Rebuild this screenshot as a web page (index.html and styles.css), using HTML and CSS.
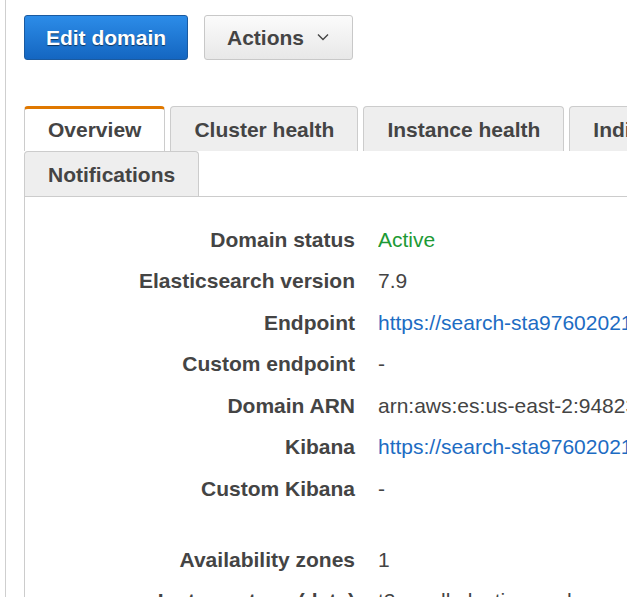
FILE: index.html
```html
<!DOCTYPE html>
<html>
<head>
<meta charset="utf-8">
<link rel="stylesheet" href="styles.css">
</head>
<body>
<div class="page">
  <div class="toolbar">
    <button class="btn btn-primary">Edit domain</button>
    <button class="btn btn-default">Actions
      <svg class="chev" width="12" height="8" viewBox="0 0 12 8"><path d="M1 1.5 L6 6.5 L11 1.5" fill="none" stroke="#444" stroke-width="1.4"/></svg>
    </button>
  </div>
  <div class="tabs-wrap">
    <div class="tabs">
      <div class="tab active">Overview</div>
      <div class="tab">Cluster health</div>
      <div class="tab">Instance health</div>
      <div class="tab">Indices</div>
      <div class="tab">Notifications</div>
    </div>
    <div class="panel">
      <div class="details">
        <div class="label">Domain status</div><div class="value green">Active</div>
        <div class="label">Elasticsearch version</div><div class="value">7.9</div>
        <div class="label">Endpoint</div><div class="value link">https://search-sta97602021-x7k2nq4lpz3aw5bcrt6vd.us-east-2.es.amazonaws.com</div>
        <div class="label">Custom endpoint</div><div class="value">-</div>
        <div class="label">Domain ARN</div><div class="value">arn:aws:es:us-east-2:948235213456:domain/sta97602021</div>
        <div class="label">Kibana</div><div class="value link">https://search-sta97602021-x7k2nq4lpz3aw5bcrt6vd.us-east-2.es.amazonaws.com/_plugin/kibana/</div>
        <div class="label">Custom Kibana</div><div class="value">-</div>
        <div class="spacer"></div>
        <div class="label">Availability zones</div><div class="value">1</div>
        <div class="label">Instance type (data)</div><div class="value">t2.small.elasticsearch</div>
      </div>
    </div>
  </div>
</div>
</body>
</html>
```
FILE: styles.css
```css
html, body {
  margin: 0;
  padding: 0;
  overflow: hidden;
  background: #fff;
  height: 597px;
}
body {
  font-family: "Liberation Sans", Arial, sans-serif;
  font-size: 21px;
  color: #444;
}
.page {
  margin-left: 5px;
  border-left: 1px solid #cfcfcf;
  padding: 15px 0 0 18px;
  min-height: 700px;
  width: 760px;
}
.toolbar {
  display: flex;
  gap: 16px;
  height: 45px;
}
.btn {
  box-sizing: border-box;
  height: 45px;
  font-family: inherit;
  font-size: 21px;
  font-weight: bold;
  border-radius: 3px;
  display: flex;
  align-items: center;
  cursor: pointer;
}
.btn-primary {
  width: 164px;
  justify-content: center;
  padding: 1px 0 0;
  color: #fff;
  background: linear-gradient(#2c8ce8, #1466c1);
  border: 1px solid #1a5aa0;
  text-shadow: 0 1px 1px rgba(0,0,0,0.55);
}
.btn-default {
  width: 149px;
  padding: 1px 0 0 22px;
  color: #444;
  background: linear-gradient(#fbfbfb, #e8e8e8);
  border: 1px solid #c8c8c8;
}
.chev {
  margin-left: 13px;
  margin-top: -3px;
}
.tabs-wrap {
  margin-top: 46px;
  width: 740px;
}
.tabs {
  display: flex;
  flex-wrap: wrap;
  column-gap: 5px;
}
.tab {
  box-sizing: border-box;
  height: 45px;
  padding: 1px 23px 0;
  display: flex;
  align-items: center;
  font-weight: bold;
  color: #444;
  background: #eee;
  border: 1px solid #ccc;
  border-bottom: none;
  border-radius: 4px 4px 0 0;
  white-space: nowrap;
}
.tab.active {
  background: #fff;
  border-top: 3px solid #e07800;
  padding-top: 0;
}
.panel {
  border-left: 1px solid #ccc;
  border-top: 1px solid #ccc;
  padding-top: 21.5px;
  min-height: 500px;
}
.details {
  display: grid;
  grid-template-columns: 330px 1fr;
  column-gap: 23px;
}
.label, .value {
  line-height: 23px;
  padding: 9.25px 0;
  white-space: nowrap;
}
.label {
  font-weight: bold;
  text-align: right;
}
.value {
  color: #444;
  overflow: hidden;
}
.green { color: #1d9a35; }
.link { color: #1d6cc3; }
.spacer {
  grid-column: 1 / -1;
  height: 29.5px;
}
```
